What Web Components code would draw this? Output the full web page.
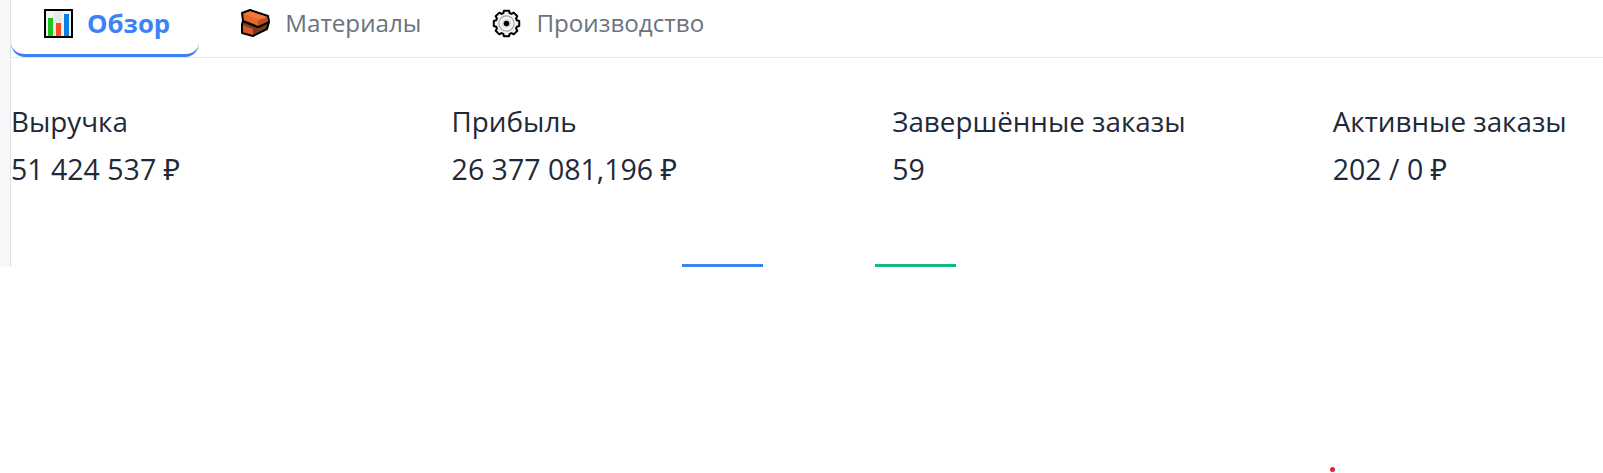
<!DOCTYPE html>
<html lang="ru">
<head>
<meta charset="utf-8">
<title>Обзор</title>
<style>
    html, body { margin: 0; padding: 0; background: #fff; height: 473px; overflow: hidden; }
    body { font-family: "Open Sans", "Noto Sans", sans-serif; }
</style>
</head>
<body>
<dashboard-page>
    <tab-bar>
        <tab-item active label="Обзор" icon="chart"></tab-item>
        <tab-item label="Материалы" icon="brick"></tab-item>
        <tab-item label="Производство" icon="gear"></tab-item>
    </tab-bar>
    <stat-row>
        <stat-item label="Выручка" value="51 424 537 ₽"></stat-item>
        <stat-item label="Прибыль" value="26 377 081,196 ₽"></stat-item>
        <stat-item label="Завершённые заказы" value="59"></stat-item>
        <stat-item label="Активные заказы" value="202 / 0 ₽"></stat-item>
    </stat-row>
    <chart-legend></chart-legend>
</dashboard-page>
<script>
// 8 tooth outline for the gear icon
function gearPath(cx, cy, outer, inner) {
    const pts = [];
    for (let i = 0; i < 8; i++) {
        const a = i * Math.PI / 4 - Math.PI / 2;
        [[-0.3, inner], [-0.2, outer], [0.2, outer], [0.3, inner]].forEach(([da, r]) => {
            pts.push(`${(cx + r * Math.cos(a + da)).toFixed(2)} ${(cy + r * Math.sin(a + da)).toFixed(2)}`);
        });
    }
    return 'M' + pts.join(' L') + ' Z';
}

const ICONS = {
    chart: `<svg width="29" height="29" viewBox="0 0 29 29">
        <rect x="1" y="1" width="27" height="27" fill="#f3f3f3" stroke="#000" stroke-width="2"/>
        <rect x="10" y="2" width="8" height="25" fill="#e9e9e9"/>
        <rect x="4" y="9" width="5" height="18" fill="#1fc41a"/>
        <rect x="12" y="14" width="5" height="13" fill="#fb4a26"/>
        <rect x="20" y="5" width="5" height="22" fill="#0c80e2"/>
    </svg>`,
    brick: `<svg width="29" height="28" viewBox="3 3 29 28">
        <path d="M4 18 L4 27 L15 30 L29 23 L31 16 L20 21 L5 15 Z" fill="#7d3a1a" stroke="#000" stroke-width="2" stroke-linejoin="round"/>
        <path d="M5 19 L15 23 L15 29 L5 26 Z" fill="#d9592a"/>
        <path d="M4 7 L12 4 L30 10 L31 16 L20 21 L5 15 Z" fill="#e8672c" stroke="#000" stroke-width="2" stroke-linejoin="round"/>
        <path d="M6 7.5 L12 5.5 L28 10.5 L20 13.5 Z" fill="#f2793a"/>
        <path d="M20 14.5 L29 11.5 L29.5 15.5 L20 19.5 Z" fill="#b9501f"/>
    </svg>`,
    gear: `<svg width="29" height="29" viewBox="0 0 29 29">
        <path d="${gearPath(14.5, 14.5, 13, 10.8)}" fill="#f1f1f1" stroke="#000" stroke-width="2" stroke-linejoin="round"/>
        <circle cx="14.5" cy="14.5" r="7.6" fill="#f7f7f7" stroke="#a6a6a6" stroke-width="1.2"/>
        <circle cx="14.5" cy="14.5" r="4.6" fill="#dedede"/>
        <circle cx="14.5" cy="14.5" r="2.8" fill="#000"/>
    </svg>`
};

class DashboardPage extends HTMLElement {
    constructor() {
        super();
        this.attachShadow({mode: 'open'}).innerHTML = `<style>
            :host { display: block; position: relative; height: 473px; overflow: hidden; }
            .main {
                height: 267px;
                padding-left: 11px;
                box-sizing: border-box;
                overflow: hidden;
                background-image: linear-gradient(to right, #f8f8fb 10px, #e2e2e4 10px, #e2e2e4 11px, #fff 11px);
            }
            .dot {
                position: absolute;
                left: 1330px;
                top: 467px;
                width: 5px;
                height: 5px;
                border-radius: 50%;
                background: #e5232d;
            }
        </style>
        <div class="main"><slot></slot></div>
        <div class="dot"></div>`;
    }
}

class TabBar extends HTMLElement {
    constructor() {
        super();
        this.attachShadow({mode: 'open'}).innerHTML = `<style>
            :host {
                display: flex;
                height: 58px;
                box-sizing: border-box;
                border-bottom: 1px solid #e5e7eb;
                gap: 9px;
            }
        </style><slot></slot>`;
    }
}

class TabItem extends HTMLElement {
    constructor() {
        super();
        this.attachShadow({mode: 'open'});
    }

    connectedCallback() {
        this.shadowRoot.innerHTML = `<style>
            :host {
                display: flex;
                align-items: flex-start;
                box-sizing: border-box;
                height: 57px;
                padding: 8px 29px 0 33px;
                gap: 15px;
                font-size: 24.2px;
                line-height: 30px;
                color: #6b7280;
                border-radius: 0 0 14px 14px;
                white-space: nowrap;
            }
            :host([active]) {
                color: #3b82f6;
                font-weight: 700;
                font-size: 25.8px;
                gap: 14px;
                border-bottom: 3px solid #3b82f6;
            }
            .icon { width: 29px; height: 30px; display: flex; align-items: center; justify-content: center; }
            svg { display: block; }
        </style>
        <span class="icon">${ICONS[this.getAttribute('icon')]}</span>
        <span>${this.getAttribute('label')}</span>`;
    }
}

class StatRow extends HTMLElement {
    constructor() {
        super();
        this.attachShadow({mode: 'open'}).innerHTML = `<style>
            :host {
                display: grid;
                grid-template-columns: repeat(4, 440.6px);
                padding-top: 44px;
                color: #1f2937;
            }
        </style><slot></slot>`;
    }
}

class StatItem extends HTMLElement {
    constructor() {
        super();
        this.attachShadow({mode: 'open'});
    }

    connectedCallback() {
        this.shadowRoot.innerHTML = `<style>
            :host {
                display: flex;
                flex-direction: column;
                gap: 10px;
                font-size: 27.8px;
                line-height: 38px;
                white-space: nowrap;
            }
            .value { font-size: 28.5px; }
        </style>
        <div>${this.getAttribute('label')}</div>
        <div class="value">${this.getAttribute('value')}</div>`;
    }
}

class ChartLegend extends HTMLElement {
    constructor() {
        super();
        this.attachShadow({mode: 'open'}).innerHTML = `<style>
            :host {
                display: flex;
                gap: 112px;
                padding: 76px 0 0 671px;
            }
            .line { width: 81px; height: 3px; }
        </style>
        <div class="line" style="background:#3b82f6"></div>
        <div class="line" style="background:#10b981"></div>`;
    }
}

customElements.define('dashboard-page', DashboardPage);
customElements.define('tab-bar', TabBar);
customElements.define('tab-item', TabItem);
customElements.define('stat-row', StatRow);
customElements.define('stat-item', StatItem);
customElements.define('chart-legend', ChartLegend);
</script>
</body>
</html>
